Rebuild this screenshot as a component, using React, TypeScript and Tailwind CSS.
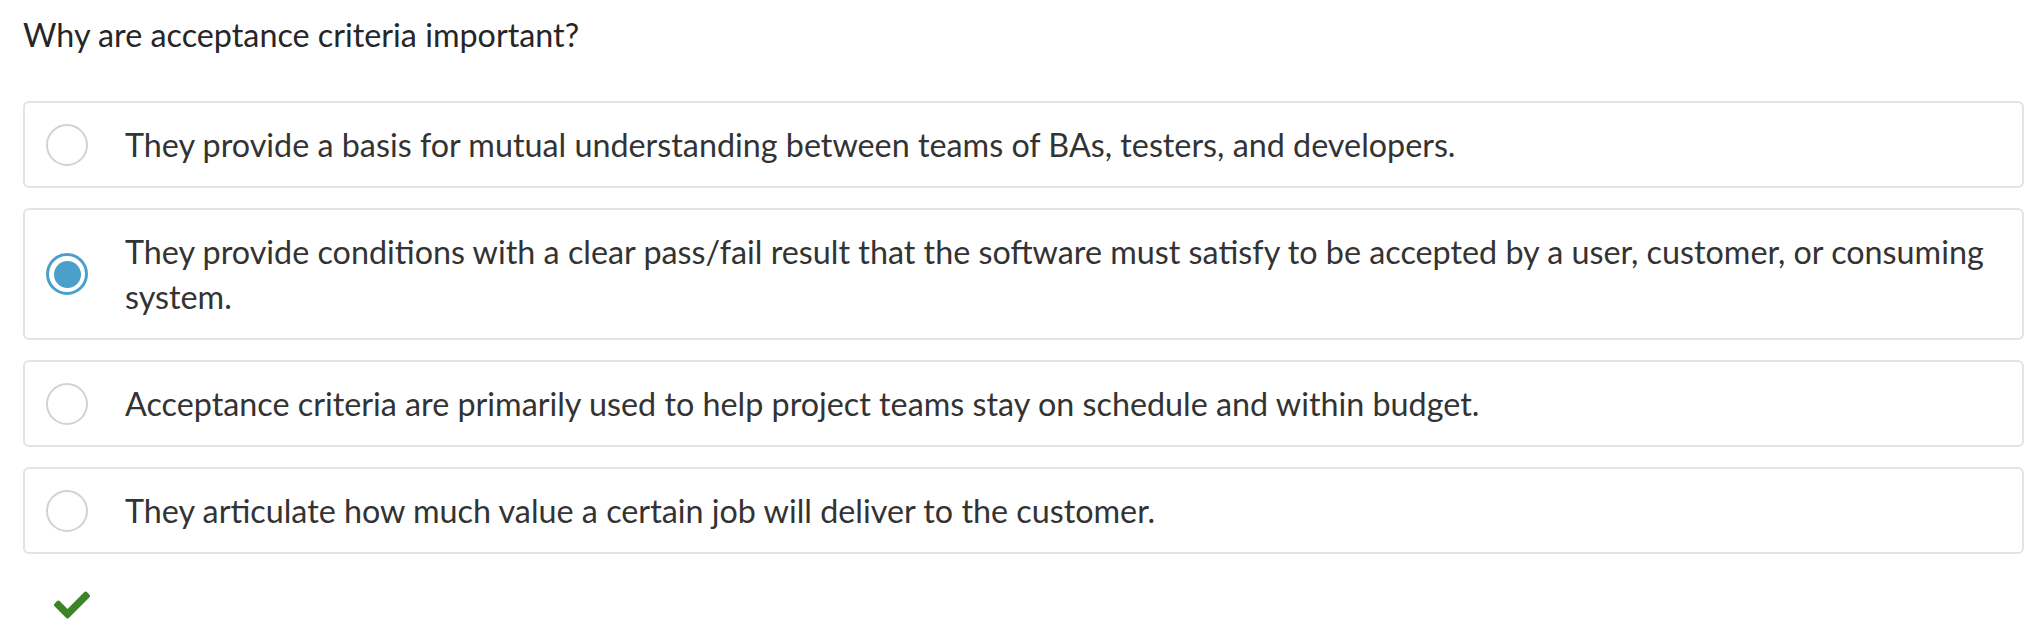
import React, { useState } from 'react';

const options = [
  'They provide a basis for mutual understanding between teams of BAs, testers, and developers.',
  'They provide conditions with a clear pass/fail result that the software must satisfy to be accepted by a user, customer, or consuming system.',
  'Acceptance criteria are primarily used to help project teams stay on schedule and within budget.',
  'They articulate how much value a certain job will deliver to the customer.',
];

const Radio: React.FC<{ checked: boolean }> = ({ checked }) =>
  checked ? (
    <div className="w-[42px] h-[42px] shrink-0 rounded-full border-[3px] border-[#4a9fcb] flex items-center justify-center">
      <div className="w-[27px] h-[27px] rounded-full bg-[#4a9fcb]" />
    </div>
  ) : (
    <div className="w-[42px] h-[42px] shrink-0 rounded-full border-2 border-[#d2d2d2] bg-white" />
  );

export default function App() {
  const [selected, setSelected] = useState(1);

  return (
    <div className="min-h-screen bg-white pl-[23px] pr-[4px] pt-[11px] text-[#333] font-['Lato','Liberation_Sans',sans-serif] text-[32.3px]">
      <h1 className="leading-[48px] mb-[42px] font-normal text-[#262626]">Why are acceptance criteria important?</h1>

      <div className="flex flex-col gap-[20px]">
        {options.map((text, i) => (
          <label
            key={i}
            onClick={() => setSelected(i)}
            className="flex items-center border-2 border-[#e3e3e3] rounded-[6px] pl-[21px] pr-[16px] py-[19px] cursor-pointer"
          >
            <Radio checked={selected === i} />
            <span className="ml-[37px] leading-[45px]">{text}</span>
          </label>
        ))}
      </div>

      {/* result */}
      <div className="mt-[37px] pl-[31px]">
        <svg width="36" height="28" viewBox="0 64 512 384" fill="#3b8527">
          <path d="M173.898 439.404l-166.4-166.4c-9.997-9.997-9.997-26.206 0-36.204l36.203-36.204c9.997-9.998 26.207-9.998 36.204 0L192 312.69 432.095 72.596c9.997-9.997 26.207-9.997 36.204 0l36.203 36.204c9.997 9.997 9.997 26.206 0 36.204l-294.4 294.401c-9.998 9.997-26.207 9.997-36.204-.001z" />
        </svg>
      </div>
    </div>
  );
}
